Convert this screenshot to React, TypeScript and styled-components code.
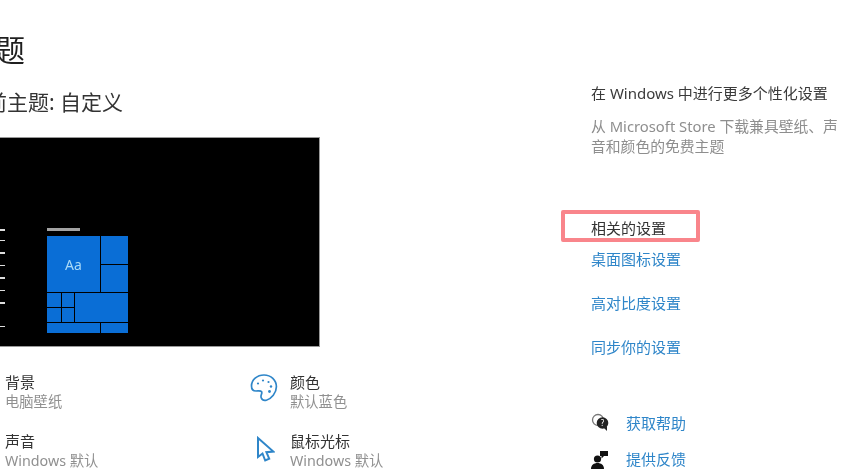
import React from 'react';
import styled, { createGlobalStyle } from 'styled-components';

const GlobalStyle = createGlobalStyle`
  html, body {
    margin: 0;
    height: 100%;
    overflow: hidden;
    background: #fff;
  }
`;

const Page = styled.div`
  display: flex;
  width: 859px;
  height: 473px;
  overflow: hidden;
  background: #fff;
  color: #222;
  font-family: 'Noto Sans', 'Noto Sans CJK SC', sans-serif;
  filter: blur(0.7px);
`;

// the left column runs off the edge of the picture, the crop is part of the reference
const ThemeColumn = styled.main`
  flex: none;
  width: 626px;
  margin-left: -35px;
  padding-top: 32px;
`;

const Title = styled.h1`
  margin: 0;
  font-size: 30px;
  line-height: 36px;
  font-weight: 400;
  color: #1f1f1f;
`;

const Subtitle = styled.h2`
  margin: 19px 0 0;
  font-size: 21px;
  line-height: 30px;
  font-weight: 400;
  color: #333;
`;

const Preview = styled.div`
  display: flex;
  width: 355px;
  height: 210px;
  margin-top: 20px;
  box-sizing: border-box;
  background: #000;
  border: 1px solid #999;
  border-left: 0;
`;

const TaskList = styled.div`
  flex: none;
  width: 40px;
  margin-right: 42px;
  display: flex;
  flex-direction: column;
  align-items: flex-start;
  padding-top: 91px;
`;

const Tick = styled.span<{ $gap: number }>`
  display: block;
  width: 40px;
  height: 1.5px;
  margin-top: ${({ $gap }) => $gap}px;
  background: linear-gradient(to right, transparent 35px, #ddd 35px);
`;

const StartColumn = styled.div`
  display: flex;
  flex-direction: column;
  padding-top: 90px;
`;

const StartBar = styled.span`
  display: block;
  width: 33px;
  height: 3px;
  background: #a3a3a3;
`;

const Tiles = styled.div`
  display: grid;
  grid-template-columns: 14px 12px 25px 27px;
  grid-template-rows: 28px 27px 14px 14px 10px;
  gap: 1px;
  width: 81px;
  height: 97px;
  margin-top: 5px;
`;

const Tile = styled.div<{ $col: string; $row: string }>`
  grid-column: ${({ $col }) => $col};
  grid-row: ${({ $row }) => $row};
  background: #0a6ed6;
  display: flex;
  align-items: center;
  justify-content: center;
  color: #a9d9f7;
  font-size: 14px;
`;

const OptionGrid = styled.div`
  display: grid;
  grid-template-columns: 285px 240px;
  row-gap: 19px;
  margin-top: 25px;
`;

const Option = styled.div`
  display: flex;
  align-items: flex-start;
`;

const OptionIcon = styled.div`
  flex: none;
  width: 40px;
  height: 40px;
  color: #2f86c9;
`;

const PaletteSvg = styled.svg`
  display: block;
  width: 28px;
  height: 30px;
  margin-top: 1px;
`;

const CursorSvg = styled.svg`
  display: block;
  width: 19px;
  height: 27px;
  margin: 5px 0 0 6px;
`;

const OptionText = styled.div`
  display: flex;
  flex-direction: column;
`;

const OptionName = styled.span`
  font-size: 15px;
  line-height: 20px;
  color: #333;
`;

const OptionValue = styled.span`
  font-size: 14.3px;
  line-height: 20px;
  color: #909090;
`;

const SideColumn = styled.aside`
  flex: none;
  width: 260px;
  padding-top: 83px;
`;

const SideTitle = styled.div`
  font-size: 15px;
  line-height: 20px;
  color: #3a3a3a;
  white-space: nowrap;
`;

const SideText = styled.p`
  margin: 13px 0 0;
  width: 250px;
  font-size: 14.8px;
  line-height: 20px;
  color: #8e8e8e;
`;

const RelatedHeading = styled.div`
  position: relative;
  margin-top: 62px;
  font-size: 15px;
  line-height: 20px;
  color: #333;

  &::after {
    content: '';
    position: absolute;
    left: -30px;
    top: -8px;
    width: 139px;
    height: 32px;
    box-sizing: border-box;
    border: 4px solid #f9858b;
    border-radius: 2px;
  }
`;

const LinkList = styled.div`
  display: flex;
  flex-direction: column;
  gap: 24px;
  margin-top: 11px;
`;

const SideLink = styled.a`
  font-size: 15px;
  line-height: 20px;
  color: #2f86c9;
`;

const HelpList = styled.div`
  display: flex;
  flex-direction: column;
  gap: 16px;
  margin-top: 56px;
`;

const HelpRow = styled.div`
  display: flex;
  align-items: center;
  gap: 17px;
`;

const HelpIcon = styled.svg`
  flex: none;
  width: 18px;
  height: 20px;
`;

const ticks = [0, 9, 11, 11, 11, 11, 11, 22];

const tiles = [
  { col: '1 / 4', row: '1 / 3', label: 'Aa' },
  { col: '4', row: '1' },
  { col: '4', row: '2' },
  { col: '1', row: '3' },
  { col: '2', row: '3' },
  { col: '1', row: '4' },
  { col: '2', row: '4' },
  { col: '3 / 5', row: '3 / 5' },
  { col: '1 / 4', row: '5' },
  { col: '4', row: '5' },
];

function PaletteIcon() {
  return (
    <PaletteSvg viewBox="0 0 28 30" fill="none" stroke="currentColor" strokeWidth="1.7">
      <path d="M14 2C7 2 1.5 6.8 1.5 13c0 3.2 1.8 5 4.5 5 2.4 0 4.6-.8 5.6.8 1 1.7-1.4 3.4-.4 6 .8 2 3 3 5.2 2.4 5-1.4 10-7.4 10-13.4C26.4 7 21 2 14 2z" />
      <circle cx="8" cy="10.5" r="1.1" fill="currentColor" stroke="none" />
      <circle cx="13" cy="7.5" r="1.1" fill="currentColor" stroke="none" />
      <circle cx="18.5" cy="9" r="1.1" fill="currentColor" stroke="none" />
      <circle cx="21" cy="13.5" r="1.2" fill="currentColor" stroke="none" />
      <circle cx="19.5" cy="18.5" r="1.4" fill="currentColor" stroke="none" />
    </PaletteSvg>
  );
}

function CursorIcon() {
  return (
    <CursorSvg viewBox="0 0 19 27" fill="none" stroke="currentColor" strokeWidth="2" strokeLinejoin="miter">
      <path d="M2 2v19l4.5-3.5 2.7 7 4-1.8-2.8-6.5 7-.6z" />
    </CursorSvg>
  );
}

export default function App() {
  return (
    <Page>
      <GlobalStyle />
      <ThemeColumn>
        <Title>主题</Title>
        <Subtitle>当前主题: 自定义</Subtitle>
        <Preview>
          <TaskList>
            {ticks.map((gap, i) => (
              <Tick key={i} $gap={gap} />
            ))}
          </TaskList>
          <StartColumn>
            <StartBar />
            <Tiles>
              {tiles.map((t, i) => (
                <Tile key={i} $col={t.col} $row={t.row}>
                  {t.label}
                </Tile>
              ))}
            </Tiles>
          </StartColumn>
        </Preview>
        <OptionGrid>
          <Option>
            <OptionIcon />
            <OptionText>
              <OptionName>背景</OptionName>
              <OptionValue>电脑壁纸</OptionValue>
            </OptionText>
          </Option>
          <Option>
            <OptionIcon>
              <PaletteIcon />
            </OptionIcon>
            <OptionText>
              <OptionName>颜色</OptionName>
              <OptionValue>默认蓝色</OptionValue>
            </OptionText>
          </Option>
          <Option>
            <OptionIcon />
            <OptionText>
              <OptionName>声音</OptionName>
              <OptionValue>Windows 默认</OptionValue>
            </OptionText>
          </Option>
          <Option>
            <OptionIcon>
              <CursorIcon />
            </OptionIcon>
            <OptionText>
              <OptionName>鼠标光标</OptionName>
              <OptionValue>Windows 默认</OptionValue>
            </OptionText>
          </Option>
        </OptionGrid>
      </ThemeColumn>
      <SideColumn>
        <SideTitle>在 Windows 中进行更多个性化设置</SideTitle>
        <SideText>从 Microsoft Store 下载兼具壁纸、声音和颜色的免费主题</SideText>
        <RelatedHeading>相关的设置</RelatedHeading>
        <LinkList>
          <SideLink>桌面图标设置</SideLink>
          <SideLink>高对比度设置</SideLink>
          <SideLink>同步你的设置</SideLink>
        </LinkList>
        <HelpList>
          <HelpRow>
            <HelpIcon viewBox="0 0 18 20">
              <circle cx="7" cy="7" r="5.5" fill="none" stroke="#777" strokeWidth="1.3" />
              <circle cx="11.5" cy="10" r="5.8" fill="#222" />
              <path d="M13 15l3 3v-5z" fill="#222" />
              <text x="11.5" y="13" fontSize="8" fill="#fff" textAnchor="middle">?</text>
            </HelpIcon>
            <SideLink>获取帮助</SideLink>
          </HelpRow>
          <HelpRow>
            <HelpIcon viewBox="0 0 18 20">
              <circle cx="6.5" cy="10" r="3.6" fill="#111" />
              <path d="M0 20c0-4 3-6 6.5-6s6.5 2 6.5 6z" fill="#111" />
              <path d="M9 2h8v5h-4l-2.5 2.5V7H9z" fill="#111" />
            </HelpIcon>
            <SideLink>提供反馈</SideLink>
          </HelpRow>
        </HelpList>
      </SideColumn>
    </Page>
  );
}
